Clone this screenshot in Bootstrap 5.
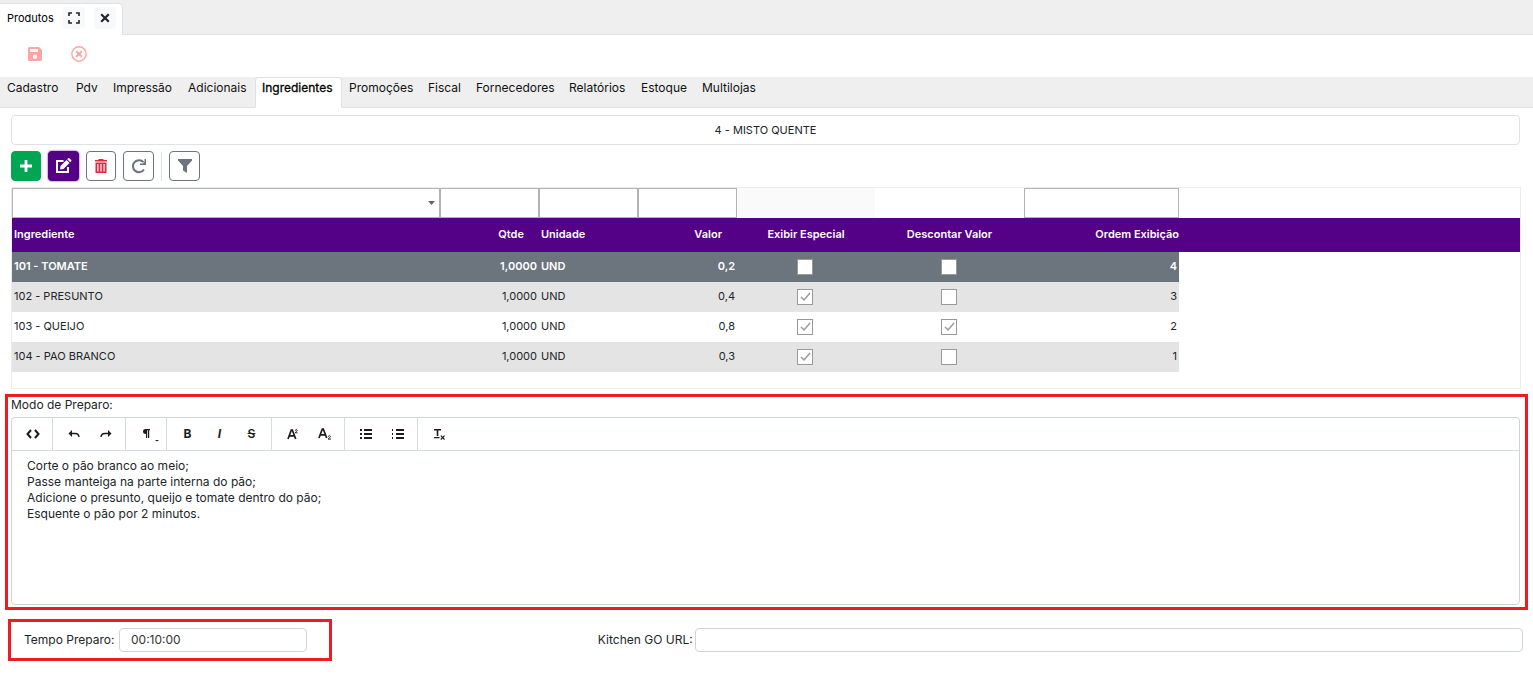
<!DOCTYPE html>
<html lang="pt-BR">
<head>
<meta charset="utf-8">
<meta name="viewport" content="width=device-width, initial-scale=1">
<title>Produtos</title>
<link href="https://cdn.jsdelivr.net/npm/bootstrap@5.3.0/dist/css/bootstrap.min.css" rel="stylesheet">
<style>
  body { font-family: Inter, "Liberation Sans", sans-serif; font-size: 12px; line-height: 16px; color: #212529; background: #fff; }
  button, input, select { font: inherit; }
  svg { display: block; fill: currentColor; }

  .window-bar { background: #efefef; height: 35px; padding-top: 3px; border-bottom: 1px solid #dee2e6; }
  .window-tab { height: 32px; width: 123px; padding: 0 0 3px 7px; background: #fff; border: 1px solid #dee2e6; border-width: 1px 1px 0 0; border-radius: 0 4px 0 0; color: #000; }
  .window-tab .tab-label { width: 49px; margin-right: 7px; font-size: 11px; }
  .tab-tool { width: 22px; height: 22px; padding: 0; border: 0; border-radius: 4px; background: #f8f9fa; color: #212529; }
  .window-tab .tab-close { margin-left: 9px; }
  .record-bar { height: 42px; padding: 0 27px 4px; gap: 28px; }
  .record-bar button { width: 16px; height: 16px; padding: 0; border: 0; background: none; color: #ffa4a4; }

  .section-tabs { display: grid; grid-template-columns: 69px 37px 75px 74px 87px 79px 48px 93px 72px 61px auto; height: 31px; background: #efefef; border-bottom: 1px solid #dee2e6; }
  .section-tabs .nav-link { padding: 2px 6px; height: 31px; border: 1px solid transparent; border-radius: 4px 4px 0 0; color: #111; white-space: nowrap; }
  .section-tabs .nav-link.active { background: #fff; border-color: #dee2e6 #dee2e6 #fff; color: #000; -webkit-text-stroke: .3px; }

  .content { margin: 7px 13px 0 11px; }
  .product-title { height: 30px; border: 1px solid #dee2e6; border-radius: 4px; font-size: 11px; }
  .action-bar { gap: 7px; margin: 6px 0; height: 30px; }
  .action-bar button { width: 30px; height: 30px; padding: 0; border-radius: 4px; border: 1px solid #6c757d; background: #fff; color: #6c757d; }
  .action-bar .wide { width: 31px; }
  .action-bar .act-add { background: #00a651; border-color: #00a651; color: #fff; }
  .action-bar .act-edit { background: #540087; border-color: #540087; color: #fff; box-shadow: 0 0 2px #540087; }
  .action-bar .act-delete { color: #e6263f; }
  .action-bar .divider { width: 1px; height: 29px; background: #dee2e6; }

  .grid-box { height: 202px; margin-right: -1px; border: 1px solid #ececec; }
  .grid-table { width: 100%; table-layout: fixed; border-collapse: collapse; }
  .grid-table td, .grid-table th { padding: 0 2px 2px; white-space: nowrap; }
  .grid-table .filters td { height: 30px; padding: 0; }
  .filters input, .filters select { display: block; width: 100%; height: 30px; border: 1px solid #b3b3b3; border-radius: 0; background-color: #fff; }
  .filters select { appearance: none; background: url("data:image/svg+xml,%3Csvg xmlns='http://www.w3.org/2000/svg' width='7' height='4'%3E%3Cpath d='M0 0h7L3.5 4z' fill='%23666'/%3E%3C/svg%3E") no-repeat right 4px center; }
  .filters .muted-cell { background: #fafafa; }
  .heads th { height: 34px; background: #540087; color: #fff; font-weight: 600; font-size: 11px; }
  .grid-table .heads .sortable { padding-right: 15px; }
  .grid-table .heads .flush { padding-right: 0; }
  .rows tr { height: 30px; }
  .rows td { font-size: 11px; }
  .rows .striped td:not(:last-child) { background: #e4e4e4; }
  .rows .selected td:not(:last-child) { background: #6c757d; color: #fff; font-weight: 600; }
  .grid-table .tick { padding: 0 2px 0 0; }
  .rows input { display: block; appearance: none; width: 16px; height: 16px; margin: 0 auto; border: 1px solid #999; background: #fff; }
  .rows input:checked { background: #fff url("data:image/svg+xml,%3Csvg xmlns='http://www.w3.org/2000/svg' width='14' height='14'%3E%3Cpath d='M3 7l3 3 6-7' fill='none' stroke='%23999' stroke-width='1.5'/%3E%3C/svg%3E") center no-repeat; }

  .marked { border: 3px solid #ed1c24; }
  .prep-box { margin: 5px 5px 0; padding: 0 5px 2px 3px; }
  .prep-box .caption { height: 20px; }
  .editor { height: 188px; border: 1px solid #ced4da; border-radius: 4px; }
  .editor-tools { height: 33px; border-bottom: 1px solid #d5dce0; }
  .tool-group { height: 32px; padding: 0 4px; border-right: 1px solid #d5dce0; }
  .tool-group:last-child { border-right: 0; }
  .tool-group button { width: 32px; height: 32px; padding: 0 0 0 1px; border: 0; background: none; color: #1c1c1c; }
  .editor-text { padding: 7px 15px; }
  .fields { margin-top: 9px; }
  .time-col { flex: 0 0 39%; padding-left: 8px; }
  .time-box { width: 324px; height: 42px; padding: 0 22px 0 13px; }
  .fields label { flex: none; padding-bottom: 1px; }
  .time-box label { width: 95px; }
  .url-col label { width: 97px; }
  .url-col { padding-right: 10px; }
  .fields .form-control { height: 24px; min-height: 24px; padding: 0 11px 2px; border-radius: 4px; border-color: #ced4da; font-size: 12px; color: #333; }
</style>
</head>
<body>
<header class="window-bar">
  <div class="window-tab d-flex align-items-center">
    <span class="tab-label">Produtos</span>
    <button class="tab-tool d-flex align-items-center justify-content-center" aria-label="Expandir"><svg width="12" height="12" viewBox="0 0 12 12"><path d="M1 4V1h3M8 1h3v3M11 8v3H8M4 11H1V8" fill="none" stroke="currentColor" stroke-width="1.6"/></svg></button>
    <button class="tab-tool tab-close d-flex align-items-center justify-content-center" aria-label="Fechar"><svg width="10" height="10" viewBox="0 0 10 10"><path d="M1.200 1.200l7.600 7.600M8.800 1.200L1.200 8.800" stroke="currentColor" stroke-width="2.200"/></svg></button>
  </div>
</header>
<div class="record-bar d-flex align-items-center">
  <button aria-label="Salvar"><svg width="16" height="16" viewBox="0 0 16 16"><path fill-rule="evenodd" d="M3 1h9l3 3v9.500a1.500 1.500 0 0 1-1.500 1.500h-11A1.500 1.500 0 0 1 1 13.500v-11A1.500 1.500 0 0 1 2.500 1zM3 3v3h8V3zM8 8.500a2.200 2.200 0 1 0 .01 0z"/></svg></button>
  <button aria-label="Cancelar"><svg width="16" height="16" viewBox="0 0 16 16"><circle cx="8" cy="8" r="7.200" fill="none" stroke="currentColor" stroke-width="1.400"/><path d="M5.200 5.200l5.600 5.600M10.800 5.200l-5.600 5.600" stroke="currentColor" stroke-width="2"/></svg></button>
</div>
<nav class="section-tabs">
  <a class="nav-link" href="#">Cadastro</a>
  <a class="nav-link" href="#">Pdv</a>
  <a class="nav-link" href="#">Impressão</a>
  <a class="nav-link" href="#">Adicionais</a>
  <a class="nav-link active" href="#" aria-current="page">Ingredientes</a>
  <a class="nav-link" href="#">Promoções</a>
  <a class="nav-link" href="#">Fiscal</a>
  <a class="nav-link" href="#">Fornecedores</a>
  <a class="nav-link" href="#">Relatórios</a>
  <a class="nav-link" href="#">Estoque</a>
  <a class="nav-link" href="#">Multilojas</a>
</nav>
<main>
  <div class="content">
    <div class="product-title d-flex align-items-center justify-content-center">4 - MISTO QUENTE</div>
    <div class="action-bar d-flex align-items-center">
      <button class="act-add d-flex align-items-center justify-content-center" aria-label="Adicionar"><svg width="14" height="14" viewBox="0 0 14 14"><path d="M7 1v12M1 7h12" stroke="currentColor" stroke-width="2.800"/></svg></button>
      <button class="act-edit wide d-flex align-items-center justify-content-center" aria-label="Editar"><svg width="17" height="16" viewBox="0 0 17 16"><path d="M8.500 3H2v11h11V9" fill="none" stroke="currentColor" stroke-width="2"/><path d="M5 11.500l.5-3.500 6-6 3 3-6 6zM12.200 1.300l1-1q.6-.5 1.200 0L16.200 2q.5.600 0 1.200l-1 1z"/></svg></button>
      <button class="act-delete d-flex align-items-center justify-content-center" aria-label="Excluir"><svg width="14" height="16" viewBox="0 0 14 16"><path fill-rule="evenodd" d="M1 2h3l1-1h4l1 1h3v1.600H1zM1.500 4.500h11V15h-11zM3.300 6v7.500h1.200V6zM6.400 6v7.500h1.200V6zM9.500 6v7.500h1.200V6z"/></svg></button>
      <button class="wide d-flex align-items-center justify-content-center" aria-label="Atualizar"><svg width="16" height="16" viewBox="0 0 16 16"><path d="M12.500 4.200A6 6 0 1 0 13 11.500" fill="none" stroke="currentColor" stroke-width="2"/><path d="M15 1v6H9V5.500h2.800L13.500 4V1z"/></svg></button>
      <span class="divider"></span>
      <button class="wide d-flex align-items-center justify-content-center" aria-label="Filtrar"><svg width="16" height="16" viewBox="0 0 16 16"><path d="M1 1h14v1.500L10 8v7l-4-2.500V8L1 2.500z"/></svg></button>
    </div>
    <div class="grid-box">
      <table class="grid-table">
        <colgroup><col style="width:428px"><col style="width:99px"><col style="width:99px"><col style="width:99px"><col style="width:138px"><col style="width:149px"><col style="width:155px"><col></colgroup>
        <thead>
          <tr class="filters">
            <td><select aria-label="Filtrar ingrediente"><option></option></select></td>
            <td><input aria-label="Filtrar quantidade"></td>
            <td><input aria-label="Filtrar unidade"></td>
            <td><input aria-label="Filtrar valor"></td>
            <td class="muted-cell"></td><td></td>
            <td><input aria-label="Filtrar ordem"></td><td></td>
          </tr>
          <tr class="heads">
            <th>Ingrediente</th><th class="text-end sortable">Qtde</th><th>Unidade</th><th class="text-end sortable">Valor</th><th class="text-center">Exibir Especial</th><th class="text-center">Descontar Valor</th><th class="text-end flush">Ordem Exibição</th><th></th>
          </tr>
        </thead>
        <tbody class="rows">
          <tr class="selected"><td>101 - TOMATE</td><td class="text-end">1,0000</td><td>UND</td><td class="text-end">0,2</td><td class="tick"><input type="checkbox" aria-label="Exibir especial"></td><td class="tick"><input type="checkbox" aria-label="Descontar valor"></td><td class="text-end">4</td><td></td></tr>
          <tr class="striped"><td>102 - PRESUNTO</td><td class="text-end">1,0000</td><td>UND</td><td class="text-end">0,4</td><td class="tick"><input type="checkbox" aria-label="Exibir especial" checked></td><td class="tick"><input type="checkbox" aria-label="Descontar valor"></td><td class="text-end">3</td><td></td></tr>
          <tr><td>103 - QUEIJO</td><td class="text-end">1,0000</td><td>UND</td><td class="text-end">0,8</td><td class="tick"><input type="checkbox" aria-label="Exibir especial" checked></td><td class="tick"><input type="checkbox" aria-label="Descontar valor" checked></td><td class="text-end">2</td><td></td></tr>
          <tr class="striped"><td>104 - PAO BRANCO</td><td class="text-end">1,0000</td><td>UND</td><td class="text-end">0,3</td><td class="tick"><input type="checkbox" aria-label="Exibir especial" checked></td><td class="tick"><input type="checkbox" aria-label="Descontar valor"></td><td class="text-end">1</td><td></td></tr>
        </tbody>
      </table>
    </div>
  </div>

  <section class="prep-box marked">
    <div class="caption">Modo de Preparo:</div>
    <div class="editor">
      <div class="editor-tools d-flex">
        <div class="tool-group d-flex">
          <button class="d-flex align-items-center justify-content-center" aria-label="Código"><svg width="14" height="10" viewBox="0 0 14 10"><path d="M5 1L1.500 5 5 9M9 1l3.500 4L9 9" fill="none" stroke="currentColor" stroke-width="2"/></svg></button>
        </div>
        <div class="tool-group d-flex">
          <button class="d-flex align-items-center justify-content-center" aria-label="Desfazer"><svg width="12" height="10" viewBox="0 0 12 10"><path d="M2 4.500h5.500q3 0 3.500 3.500" fill="none" stroke="currentColor" stroke-width="1.400"/><path d="M4 1v7L.5 4.500z"/></svg></button>
          <button class="d-flex align-items-center justify-content-center" aria-label="Refazer"><svg width="12" height="10" viewBox="0 0 12 10"><path d="M10 4.500H4.500q-3 0-3.500 3.500" fill="none" stroke="currentColor" stroke-width="1.400"/><path d="M8 1v7l3.500-3.500z"/></svg></button>
        </div>
        <div class="tool-group d-flex">
          <button class="d-flex align-items-center justify-content-center" aria-label="Parágrafo"><svg width="24" height="16" viewBox="0 0 24 16"><path d="M10 3h5v1.200h-.800V12H13V4.200h-.800V12H11V8Q8 8 8 5.500T10 3zM20 14h4l-2 1.500z"/></svg></button>
        </div>
        <div class="tool-group d-flex">
          <button aria-label="Negrito"><b>B</b></button>
          <button aria-label="Itálico"><b><i>I</i></b></button>
          <button aria-label="Tachado" class="fw-semibold"><s>S</s></button>
        </div>
        <div class="tool-group d-flex">
          <button class="d-flex align-items-center justify-content-center" aria-label="Sobrescrito"><svg width="12" height="12" viewBox="0 0 12 12"><path d="M1 11L4.300 2h1L8.700 11M2.400 7.800h5" fill="none" stroke="currentColor" stroke-width="1.700"/><path d="M8 2.600q1.600-2 2.200-.400 0 1-2.200 2.600H10.600" fill="none" stroke="currentColor" stroke-width=".9"/></svg></button>
          <button class="d-flex align-items-center justify-content-center" aria-label="Subscrito"><svg width="14" height="12" viewBox="0 0 14 12"><path d="M1 10L4.300 1h1L8.700 10M2.400 6.800h5" fill="none" stroke="currentColor" stroke-width="1.700"/><path d="M10 8.600q2-2 2.500-.300 0 1-2.500 2.800H13" fill="none" stroke="currentColor" stroke-width=".9"/></svg></button>
        </div>
        <div class="tool-group d-flex">
          <button class="d-flex align-items-center justify-content-center" aria-label="Lista"><svg width="12" height="10" viewBox="0 0 12 10"><path d="M0 0h2v2H0zM0 4h2v2H0zM0 8h2v2H0zM4 0h8v2H4zM4 4h8v2H4zM4 8h8v2H4z"/></svg></button>
          <button class="d-flex align-items-center justify-content-center" aria-label="Lista numerada"><svg width="12" height="10" viewBox="0 0 12 10"><path d="M0 0h1v2H0zM0 4h1v2H0zM0 8h1v2H0zM4 0h8v2H4zM4 4h8v2H4zM4 8h8v2H4z"/></svg></button>
        </div>
        <div class="tool-group d-flex">
          <button class="d-flex align-items-center justify-content-center" aria-label="Limpar formatação"><svg width="12" height="12" viewBox="0 0 12 12"><path d="M1 1h7v1.600H5.300V8H3.700V2.600H1zM1 9h5.500v1.200H1z"/><path d="M7.800 7.600l3.700 3.900M11.500 7.600l-3.700 3.900" stroke="currentColor" stroke-width="1.200"/></svg></button>
        </div>
      </div>
      <div class="editor-text" contenteditable="true">Corte o pão branco ao meio;<br>Passe manteiga na parte interna do pão;<br>Adicione o presunto, queijo e tomate dentro do pão;<br>Esquente o pão por 2 minutos.</div>
    </div>
  </section>

  <form class="fields d-flex">
    <div class="time-col">
      <div class="time-box marked d-flex align-items-center">
        <label for="tempo">Tempo Preparo:</label>
        <input id="tempo" class="form-control" value="00:10:00">
      </div>
    </div>
    <div class="url-col d-flex align-items-center flex-grow-1">
      <label for="kitchen">Kitchen GO URL:</label>
      <input id="kitchen" class="form-control">
    </div>
  </form>
</main>
<script src="https://cdn.jsdelivr.net/npm/bootstrap@5.3.0/dist/js/bootstrap.bundle.min.js"></script>
</body>
</html>
